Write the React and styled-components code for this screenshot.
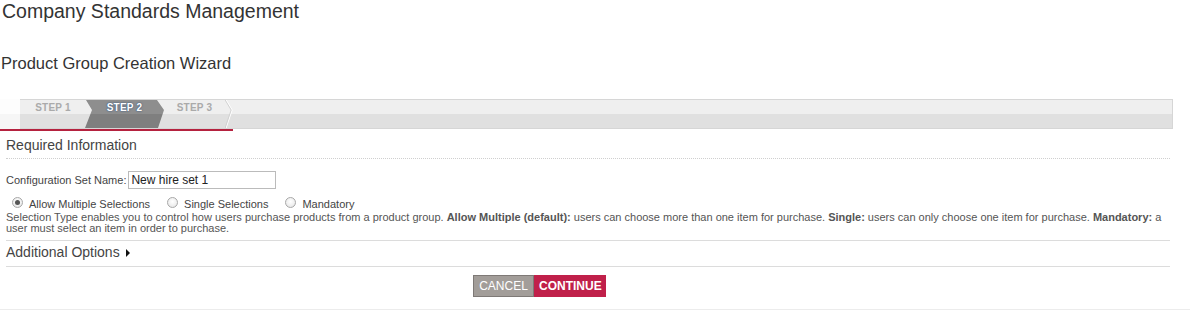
import React from "react";
import styled, { createGlobalStyle } from "styled-components";

const Global = createGlobalStyle`
  html, body { margin: 0; padding: 0; background: #fff; }
  body { font-family: "Liberation Sans", Arial, sans-serif; color: #333; }
`;

const Page = styled.div`
  width: 1190px;
  height: 310px;
  overflow: hidden;
  position: relative;
`;

const Title = styled.h1`
  margin: 0;
  padding: 0 0 0 2px;
  font-size: 19.5px;
  font-weight: normal;
  line-height: 22px;
  color: #333;
`;

const SubTitle = styled.h2`
  margin: 30px 0 0 0;
  padding-left: 1px;
  font-size: 16.5px;
  font-weight: normal;
  line-height: 22px;
  color: #333;
`;

const WizardHead = styled.div`
  margin-top: 25px;
  display: flex;
  flex-direction: column;
`;

const BarRow = styled.div`
  display: flex;
  height: 30px;
`;

const BarLead = styled.div`
  width: 20px;
  background: linear-gradient(#fdfdfd 0 50%, #f6f6f6 50% 100%);
`;

const Bar = styled.div`
  width: 1153px;
  box-sizing: border-box;
  border: 1px solid #d6d6d6;
  border-left: none;
  background: linear-gradient(#efefef 0 50%, #e0e0e0 50% 100%);
  display: flex;
`;

const Step = styled.div`
  position: relative;
  flex: none;
  width: ${(p) => p.$w}px;
  margin-left: ${(p) => p.$ml || 0}px;
  box-sizing: border-box;
  padding-top: 2px;
  text-align: center;
  font-size: 10px;
  font-weight: bold;
  letter-spacing: 0.2px;
  line-height: 11px;
  color: ${(p) => (p.$active ? "#fff" : "#aaa")};
  text-shadow: ${(p) => (p.$active ? "0 0 2px #3c5c84, 0 0 1px #3c5c84" : "none")};
  background: ${(p) =>
    p.$active ? "linear-gradient(#8e8e8e 0 50%, #7f7f7f 50% 100%)" : "transparent"};
  clip-path: ${(p) =>
    p.$active
      ? "polygon(1px 0, calc(100% - 7px) 0, 100% 36%, calc(100% - 6px) 100%, 0 100%, 7px 36%)"
      : "none"};
  z-index: ${(p) => (p.$active ? 1 : 0)};
`;

const Sep = styled.svg`
  position: absolute;
  top: 0;
  right: ${(p) => p.$r}px;
  width: 9px;
  height: 28px;
`;

const RedLine = styled.div`
  width: 233px;
  height: 2px;
  background: #b5223f;
`;

const Section = styled.div`
  margin: 0 20px 0 6px;
`;

const SectionTitle = styled.div`
  font-size: 14px;
  line-height: 18px;
  color: #444;
  padding-top: 5px;
  padding-bottom: 4px;
  border-bottom: 1px dotted #cfcfcf;
  display: flex;
  align-items: center;
  gap: 6px;
`;

const Arrow = styled.span`
  display: inline-block;
  width: 0;
  height: 0;
  margin-top: 2px;
  border-top: 4px solid transparent;
  border-bottom: 4px solid transparent;
  border-left: 4px solid #111;
`;

const FieldRow = styled.div`
  margin-top: 12px;
  display: flex;
  align-items: center;
  gap: 2px;
  font-size: 11px;
  color: #444;
`;

const TextInput = styled.input`
  width: 148px;
  height: 18px;
  box-sizing: border-box;
  border: 1px solid #bbb;
  padding: 0 2px;
  font-family: "Liberation Sans", Arial, sans-serif;
  font-size: 12px;
  color: #222;
  outline: none;
`;

const RadioRow = styled.div`
  margin-top: 9px;
  display: flex;
  align-items: center;
  font-size: 11px;
  color: #444;
  gap: 17px;
  padding-left: 6px;
`;

const RadioLabel = styled.label`
  display: flex;
  align-items: center;
  gap: 6px;
`;

const RadioDot = styled.span`
  width: 11px;
  height: 11px;
  box-sizing: border-box;
  border-radius: 50%;
  border: 1px solid #a8a8a8;
  background: radial-gradient(circle at 50% 40%, #fff 0, #eee 60%, #ddd 100%);
  display: inline-flex;
  align-items: center;
  justify-content: center;
  margin-top: -3px;
  &::after {
    content: "";
    width: 5px;
    height: 5px;
    border-radius: 50%;
    background: ${(p) => (p.$checked ? "#555" : "transparent")};
  }
`;

const Help = styled.div`
  border-bottom: 1px solid #dcdcdc;
  padding-bottom: 6px;
  margin-top: 2px;
`;

const HelpText = styled.p`
  margin: 0 -6px 0 0;
  font-size: 11px;
  line-height: 11px;
  color: #555;
  b { font-weight: bold; color: #555; }
`;

const Additional = styled(SectionTitle)`
  padding-top: 2px;
  padding-bottom: 5px;
  border-bottom: 1px solid #dcdcdc;
`;

const Actions = styled.div`
  display: flex;
  justify-content: flex-start;
  padding: 8px 0 12px 467px;
`;

const Button = styled.button`
  height: 22px;
  box-sizing: border-box;
  padding: 0 4px;
  font-family: "Liberation Sans", Arial, sans-serif;
  font-size: 12px;
  color: #fff;
  cursor: pointer;
  border: 1px solid ${(p) => (p.$primary ? "#c0204a" : "#7e7976")};
  background: ${(p) => (p.$primary ? "#c0204a" : "#a29d99")};
  font-weight: ${(p) => (p.$primary ? "bold" : "normal")};
  width: ${(p) => p.$w}px;
`;

const BottomLine = styled.div`
  border-top: 1px solid #ececec;
`;

const Chevron = ({ r }) => (
  <Sep $r={r} viewBox="0 0 9 28">
    <polyline points="1,0 7,10 1,28" fill="none" stroke="#fff" strokeWidth="1.2" />
    <polyline points="0.2,0 6.2,10 0.2,28" fill="none" stroke="#c8c8c8" strokeWidth="0.8" />
  </Sep>
);

export default function App() {
  return (
    <Page>
      <Global />
      <Title>Company Standards Management</Title>
      <SubTitle>Product Group Creation Wizard</SubTitle>
      <WizardHead>
        <BarRow>
          <BarLead />
          <Bar>
            <Step $w={66}>
              STEP 1
            </Step>
            <Step $w={79} $ml={-1} $active>
              STEP 2
            </Step>
            <Step $w={73} $ml={-6}>
              STEP 3
              <Chevron r={-3} />
            </Step>
          </Bar>
        </BarRow>
        <RedLine />
      </WizardHead>
      <Section>
        <SectionTitle>Required Information</SectionTitle>
        <FieldRow>
          <span>Configuration Set Name:</span>
          <TextInput defaultValue="New hire set 1" />
        </FieldRow>
        <RadioRow>
          <RadioLabel>
            <RadioDot $checked />
            Allow Multiple Selections
          </RadioLabel>
          <RadioLabel>
            <RadioDot />
            Single Selections
          </RadioLabel>
          <RadioLabel>
            <RadioDot />
            Mandatory
          </RadioLabel>
        </RadioRow>
        <Help>
          <HelpText>
            Selection Type enables you to control how users purchase products from a product group.{" "}
            <b>Allow Multiple (default):</b> users can choose more than one item for purchase.{" "}
            <b>Single:</b> users can only choose one item for purchase. <b>Mandatory:</b> a user must
            select an item in order to purchase.
          </HelpText>
        </Help>
        <Additional>
          Additional Options <Arrow />
        </Additional>
        <Actions>
          <Button $w={61}>CANCEL</Button>
          <Button $primary $w={72}>CONTINUE</Button>
        </Actions>
      </Section>
      <BottomLine />
    </Page>
  );
}
